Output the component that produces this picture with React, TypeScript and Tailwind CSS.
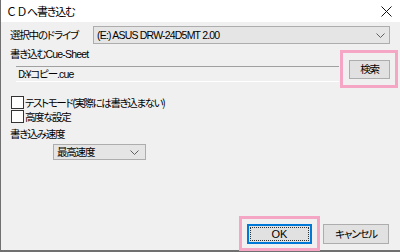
import React from 'react';

const font = "font-['Noto_Sans_CJK_JP','Noto_Sans',sans-serif] [font-feature-settings:'palt'] tracking-[-1.2px]";
const latin = "font-['Liberation_Sans',sans-serif] tracking-[-0.8px]";

function Chevron() {
  return (
    <svg width="9" height="5" viewBox="0 0 9 5" className="shrink-0">
      <path d="M0.5 0.5 L4.5 4.5 L8.5 0.5" fill="none" stroke="#606060" strokeWidth="1" />
    </svg>
  );
}

function CheckRow({ label }: { label: string }) {
  return (
    <div className="flex items-center h-[14px]">
      <div className="w-[13px] h-[13px] bg-white border border-[#333333] shrink-0" />
      <span className="ml-[1px] leading-[13px] whitespace-nowrap tracking-[-1.4px]">{label}</span>
    </div>
  );
}

export default function App() {
  return (
    <div className={`${font} relative w-[400px] h-[252px] bg-[#f0f0f0] text-[10.5px] text-black border-l border-b-2 border-[#707070] flex flex-col`}>
      {/* title bar */}
      <div className="h-[22px] bg-white flex items-center justify-between pl-[5px] pr-[8px] shrink-0">
        <span className="leading-none text-[11px]">
          <span className="[font-feature-settings:normal] tracking-[-0.5px]">ＣＤ</span>へ書き込む
        </span>
        <svg width="11" height="11" viewBox="0 0 11 11">
          <path d="M0.5 0.5 L10.5 10.5 M10.5 0.5 L0.5 10.5" stroke="#111" strokeWidth="1" />
        </svg>
      </div>

      <div className="flex flex-col flex-1 pl-[9px] pr-[10px]">
        {/* drive */}
        <div className="flex items-center mt-[4px]">
          <span className="w-[83px] leading-[14px] whitespace-nowrap">選択中のドライブ</span>
          <div className="flex-1 h-[18px] bg-[#e5e5e5] border border-[#adadad] flex items-center justify-between pl-[3px] pr-[4px]">
            <span className={`${latin} text-[10.5px] leading-none`}>(E:) ASUS DRW-24D5MT 2.00</span>
            <Chevron />
          </div>
        </div>

        {/* cue sheet */}
        <div className="mt-[3px] leading-[14px] whitespace-nowrap">書き込む<span className={latin}>Cue-Sheet</span></div>
        <div className="flex items-start">
          <div className="ml-[6px] w-[323px] mt-[5px] h-[16px] border-t border-[#a0a0a0] border-b border-b-white flex items-center pl-[2px]">
            <span className="leading-none whitespace-nowrap">D:¥コピー<span className={latin}>.cue</span></span>
          </div>
          <div className="ml-[10px] mt-[-1px] w-[41px] h-[19px] bg-[#e1e1e1] border border-[#adadad] flex items-center justify-center">
            <span className="leading-none">検索</span>
          </div>
        </div>

        {/* options */}
        <div className="mt-[13px] flex flex-col pl-[1px]">
          <CheckRow label="テストモード(実際には書き込まない)" />
          <CheckRow label="高度な設定" />
        </div>

        <div className="mt-[4px] leading-[14px]">書き込み速度</div>
        <div className="ml-[43px] mt-[3px] w-[93px] h-[16px] bg-[#e5e5e5] border border-[#adadad] flex items-center justify-between pl-[3px] pr-[6px]">
          <span className="leading-none">最高速度</span>
          <Chevron />
        </div>

        {/* buttons */}
        <div className="mt-auto mb-[6px] flex justify-end gap-[11px] pr-[1px]">
          <div className="w-[65px] h-[20px] bg-[#e1e1e1] border-2 border-[#0078d7] flex items-center justify-center p-[1px]">
            <div className="w-full h-full border border-dotted border-[#333] flex items-center justify-center">
              <span className={`${latin} tracking-normal text-[11px] leading-none`}>OK</span>
            </div>
          </div>
          <div className="w-[66px] h-[20px] bg-[#e1e1e1] border border-[#adadad] flex items-center justify-center">
            <span className="leading-none">キャンセル</span>
          </div>
        </div>
      </div>

      {/* annotation highlights */}
      <div className="absolute left-[339px] top-[50px] w-[58px] h-[38px] border-[3px] border-[#f4a6c4]" />
      <div className="absolute left-[238px] top-[216px] w-[81px] h-[35px] border-[3px] border-[#f4a6c4]" />
    </div>
  );
}
